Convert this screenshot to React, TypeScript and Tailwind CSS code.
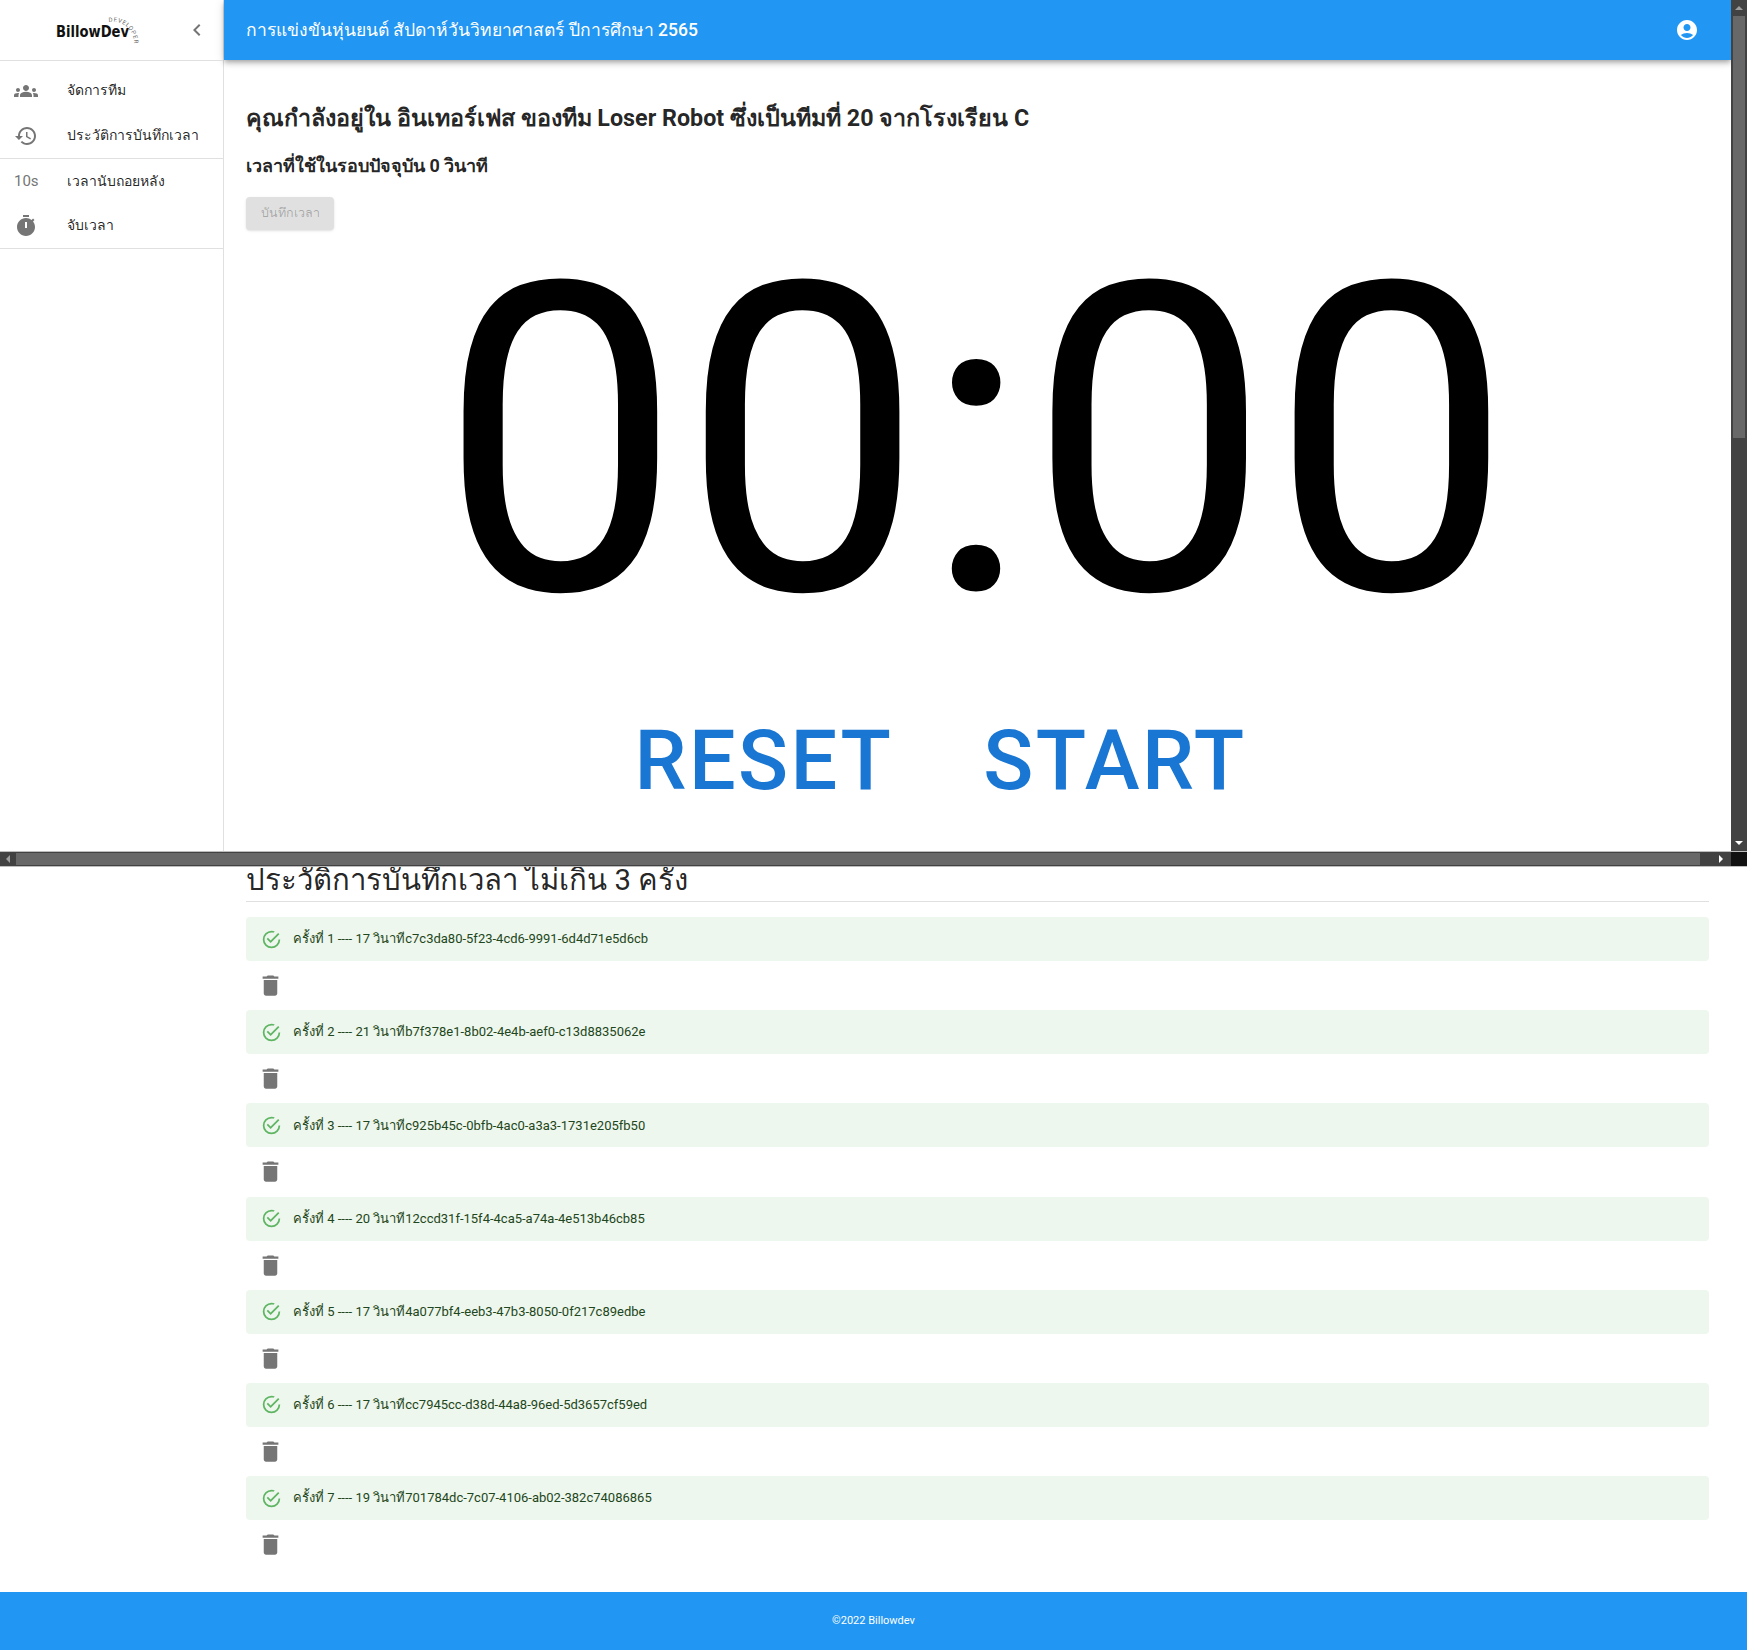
const paths = {
  groups:
    "M12 12.75c1.63 0 3.07.39 4.24.9 1.08.48 1.76 1.56 1.76 2.73V18H6v-1.61c0-1.18.68-2.26 1.76-2.73 1.17-.52 2.61-.91 4.24-.91zM4 13c1.1 0 2-.9 2-2s-.9-2-2-2-2 .9-2 2 .9 2 2 2zm1.13 1.1c-.37-.06-.74-.1-1.13-.1-.99 0-1.93.21-2.78.58C.48 14.9 0 15.62 0 16.43V18h4.5v-1.61c0-.83.23-1.61.63-2.29zM20 13c1.1 0 2-.9 2-2s-.9-2-2-2-2 .9-2 2 .9 2 2 2zm4 3.43c0-.81-.48-1.53-1.22-1.85-.85-.37-1.79-.58-2.78-.58-.39 0-.76.04-1.13.1.4.68.63 1.46.63 2.29V18H24v-1.57zM12 6c1.66 0 3 1.34 3 3s-1.34 3-3 3-3-1.34-3-3 1.34-3 3-3z",
  history:
    "M13 3c-4.97 0-9 4.03-9 9H1l3.89 3.89.07.14L9 12H6c0-3.87 3.13-7 7-7s7 3.13 7 7-3.13 7-7 7c-1.93 0-3.68-.79-4.94-2.06l-1.42 1.42C8.27 19.99 10.51 21 13 21c4.97 0 9-4.03 9-9s-4.03-9-9-9zm-1 5v5l4.28 2.54.72-1.21-3.5-2.08V8H12z",
  timer:
    "M9 1h6v2H9zm10.03 6.39 1.42-1.42c-.43-.51-.9-.99-1.41-1.41l-1.42 1.42C16.07 4.74 14.12 4 12 4c-4.97 0-9 4.03-9 9s4.02 9 9 9 9-4.03 9-9c0-2.12-.74-4.07-1.97-5.61zM13 14h-2V8h2v6z",
  account:
    "M12 2C6.48 2 2 6.48 2 12s4.48 10 10 10 10-4.48 10-10S17.52 2 12 2zm0 4c1.93 0 3.5 1.57 3.5 3.5S13.93 13 12 13s-3.5-1.57-3.5-3.5S10.07 6 12 6zm0 14c-2.03 0-4.43-.82-6.14-2.88C7.55 15.8 9.68 15 12 15s4.45.8 6.14 2.12C16.43 19.18 14.03 20 12 20z",
  trash: "M6 19c0 1.1.9 2 2 2h8c1.1 0 2-.9 2-2V7H6v12zM19 4h-3.5l-1-1h-5l-1 1H5v2h14V4z",
  success:
    "M20,12A8,8 0 0,1 12,20A8,8 0 0,1 4,12A8,8 0 0,1 12,4C12.76,4 13.5,4.11 14.2,4.31L15.77,2.74C14.61,2.26 13.34,2 12,2A10,10 0 0,0 2,12A10,10 0 0,0 12,22A10,10 0 0,0 22,12M7.91,10.08L6.5,11.5L11,16L21,6L19.59,4.58L11,13.17L7.91,10.08Z",
  chevron: "M15.41 7.41 14 6l-6 6 6 6 1.41-1.41L10.83 12z",
};

function Icon({ d, className }: { d: string; className: string }) {
  return (
    <svg viewBox="0 0 24 24" className={className} fill="currentColor">
      <path d={d} />
    </svg>
  );
}

const records = [
  { round: 1, secs: 17, id: "c7c3da80-5f23-4cd6-9991-6d4d71e5d6cb" },
  { round: 2, secs: 21, id: "b7f378e1-8b02-4e4b-aef0-c13d8835062e" },
  { round: 3, secs: 17, id: "c925b45c-0bfb-4ac0-a3a3-1731e205fb50" },
  { round: 4, secs: 20, id: "12ccd31f-15f4-4ca5-a74a-4e513b46cb85" },
  { round: 5, secs: 17, id: "4a077bf4-eeb3-47b3-8050-0f217c89edbe" },
  { round: 6, secs: 17, id: "cc7945cc-d38d-44a8-96ed-5d3657cf59ed" },
  { round: 7, secs: 19, id: "701784dc-7c07-4106-ab02-382c74086865" },
];

function NavItem({ icon, label }: { icon: React.ReactNode; label: string }) {
  return (
    <div className="flex h-[45px] items-center pl-[14px]">
      <div className="flex w-[53px] shrink-0 items-center text-[#757575]">{icon}</div>
      <span className="text-[14px] text-[rgba(0,0,0,0.87)]">{label}</span>
    </div>
  );
}

function Logo() {
  return (
    <div className="relative h-[60px] w-[160px]">
      <span className="absolute left-[56px] top-[23px] origin-left scale-x-[0.82] text-[16px] leading-[18px] font-bold text-[#111] [font-family:'DejaVu_Sans',sans-serif]">
        BillowDev
      </span>
      <svg viewBox="0 0 160 60" className="absolute inset-0 h-[60px] w-[160px]">
        <path id="logo-arc" d="M109 22 A 21 21 0 0 1 134 43" fill="none" />
        <text fontSize="6" fill="#666" fontFamily="Roboto, sans-serif" letterSpacing="0.6">
          <textPath href="#logo-arc">DEVELOPER</textPath>
        </text>
      </svg>
    </div>
  );
}

function Sidebar() {
  return (
    <aside className="h-[851px] w-[224px] shrink-0 border-r border-[#e0e0e0]">
      <div className="relative h-[61px] border-b border-[#e0e0e0]">
        <Logo />
        <Icon d={paths.chevron} className="absolute left-[185px] top-[18px] h-[24px] w-[24px] text-[#757575]" />
      </div>
      <div className="border-b border-[#e0e0e0] pt-[7px]">
        <NavItem icon={<Icon d={paths.groups} className="h-[24px] w-[24px]" />} label="จัดการทีม" />
        <NavItem icon={<Icon d={paths.history} className="h-[24px] w-[24px]" />} label="ประวัติการบันทึกเวลา" />
      </div>
      <div className="h-[90px] border-b border-[#e0e0e0]">
        <NavItem icon={<span className="text-[15px]">10s</span>} label="เวลานับถอยหลัง" />
        <div className="-mt-[1px]">
          <NavItem icon={<Icon d={paths.timer} className="h-[24px] w-[24px]" />} label="จับเวลา" />
        </div>
      </div>
    </aside>
  );
}

function RecordRow({ round, secs, id }: { round: number; secs: number; id: string }) {
  return (
    <div>
      <div className="flex h-[44px] items-center rounded-[4px] bg-[#edf7ed] pl-[15px] text-[13px] text-[#1e4620]">
        <Icon d={paths.success} className="mr-[11px] h-[21px] w-[21px] text-[#5fb563]" />
        <span>
          ครั้งที่ {round} ---- {secs} วินาที{id}
        </span>
      </div>
      <div className="flex h-[49.2px] items-center pl-[11px] text-[#757575]">
        <Icon d={paths.trash} className="h-[27px] w-[27px]" />
      </div>
    </div>
  );
}

export default function App() {
  return (
    <div className="relative min-h-[1650px] overflow-hidden bg-white font-['Roboto','Noto_Sans',sans-serif] text-[rgba(0,0,0,0.87)]">
      <div className="flex h-[1592px]">
        <Sidebar />
        <main className="w-[1507px] shrink-0">
          <header className="flex h-[60px] items-center justify-between bg-[#2196f3] pl-[22px] pr-[32px] text-white shadow-[0_2px_4px_-1px_rgba(0,0,0,0.2),0_4px_5px_0_rgba(0,0,0,0.14),0_1px_10px_0_rgba(0,0,0,0.12)]">
            <h1 className="text-[17.5px] font-medium">การแข่งขันหุ่นยนต์ สัปดาห์วันวิทยาศาสตร์ ปีการศึกษา 2565</h1>
            <Icon d={paths.account} className="h-[24px] w-[24px]" />
          </header>
          <div className="pl-[22px] pr-[22px]">
            <h5 className="mt-[40px] text-[23.3px] font-bold leading-[36px]">
              คุณกำลังอยู่ใน อินเทอร์เฟส ของทีม Loser Robot ซึ่งเป็นทีมที่ 20 จากโรงเรียน C
            </h5>
            <h6 className="mt-[18px] text-[18px] font-bold leading-[24px]">เวลาที่ใช้ในรอบปัจจุบัน 0 วินาที</h6>
            <button className="mt-[19px] block h-[33px] w-[88px] rounded-[4px] bg-[#e0e0e0] text-[12.5px] text-[rgba(0,0,0,0.26)] shadow-sm">
              บันทึกเวลา
            </button>
            <div className="-mt-[28px] pr-[3px] text-center text-[431px] leading-[480px] text-black">00:00</div>
            <div className="mt-[29px] flex justify-center gap-[90px] pr-[74px] text-[82.7px] font-medium leading-[100px] tracking-[2.4px] text-[#1976d2]">
              <span>RESET</span>
              <span>START</span>
            </div>
            <h4 className="mt-[49px] text-[29.3px] leading-[40px]">ประวัติการบันทึกเวลา ไม่เกิน 3 ครั้ง</h4>
            <hr className="mt-[1px] mb-[15px] border-[#e0e0e0]" />
            {records.map((r) => (
              <RecordRow key={r.round} {...r} />
            ))}
          </div>
        </main>
      </div>
      <footer className="flex h-[58px] items-center justify-center bg-[#2196f3] pt-[1px] text-[11px] text-white">
        ©2022 Billowdev
      </footer>

      {/* browser scrollbars caught in the capture */}
      <div className="absolute right-0 top-0 flex h-[851px] w-[16px] flex-col bg-[#424242]">
        <div className="flex h-[16px] items-center justify-center">
          <div className="h-0 w-0 border-x-[4px] border-b-[4px] border-x-transparent border-b-[#9e9e9e]" />
        </div>
        <div className="mx-[2px] h-[422px] bg-[#686868]" />
        <div className="mt-auto flex h-[16px] items-center justify-center">
          <div className="h-0 w-0 border-x-[4px] border-t-[4px] border-x-transparent border-t-white" />
        </div>
      </div>
      <div className="absolute left-0 top-[851px] flex h-[16px] w-full border-y border-[#bdbdbd] bg-[#424242]">
        <div className="flex w-[16px] items-center justify-center">
          <div className="h-0 w-0 border-y-[4px] border-r-[4px] border-y-transparent border-r-[#9e9e9e]" />
        </div>
        <div className="my-[1px] w-[1684px] bg-[#686868]" />
        <div className="flex w-[31px] items-center justify-end pr-[8px]">
          <div className="h-0 w-0 border-y-[4px] border-l-[4px] border-y-transparent border-l-white" />
        </div>
        <div className="w-[16px] bg-[#111]" />
      </div>
    </div>
  );
}
